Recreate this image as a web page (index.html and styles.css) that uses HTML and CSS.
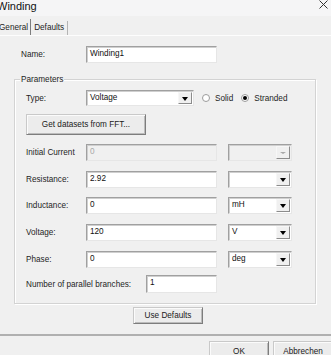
FILE: index.html
```html
<!DOCTYPE html>
<html lang="en">
<head>
    <meta charset="UTF-8">
    <meta name="viewport" content="width=device-width, initial-scale=1.0">
    <title>Winding</title>
    <link rel="stylesheet" href="styles.css">
</head>
<body>
    <div class="titlebar">
        <span class="title">Winding</span>
        <svg class="close" width="9" height="9" viewBox="0 0 9 9">
            <path d="M0.5 0.5 L8.5 8.5 M8.5 0.5 L0.5 8.5" stroke="#333" stroke-width="1"/>
        </svg>
    </div>

    <div class="tabs">
        <div class="tab active">General</div>
        <div class="tab">Defaults</div>
    </div>

    <div class="panel">
        <div class="row name-row">
            <span class="lbl">Name:</span>
            <div class="field wide">Winding1</div>
        </div>

        <!-- Parameters group box -->
        <div class="group">
            <div class="group-title">Parameters</div>

            <div class="row type-row">
                <span class="lbl">Type:</span>
                <div class="combo type-combo">
                    <span class="combo-text">Voltage</span>
                    <span class="combo-btn"><i class="arrow"></i></span>
                </div>
                <span class="radio"></span><span class="radio-text">Solid</span>
                <span class="radio checked"></span><span class="radio-text">Stranded</span>
            </div>

            <div class="btn btn-fft">Get datasets from FFT...</div>

            <div class="row first">
                <span class="lbl">Initial Current</span>
                <div class="field wide disabled">0</div>
                <div class="combo disabled">
                    <span class="combo-text"></span>
                    <span class="combo-btn"><i class="arrow"></i></span>
                </div>
            </div>
            <div class="row">
                <span class="lbl">Resistance:</span>
                <div class="field wide">2.92</div>
                <div class="combo">
                    <span class="combo-text"></span>
                    <span class="combo-btn"><i class="arrow"></i></span>
                </div>
            </div>
            <div class="row short">
                <span class="lbl">Inductance:</span>
                <div class="field wide">0</div>
                <div class="combo">
                    <span class="combo-text">mH</span>
                    <span class="combo-btn"><i class="arrow"></i></span>
                </div>
            </div>
            <div class="row">
                <span class="lbl">Voltage:</span>
                <div class="field wide">120</div>
                <div class="combo">
                    <span class="combo-text">V</span>
                    <span class="combo-btn"><i class="arrow"></i></span>
                </div>
            </div>
            <div class="row">
                <span class="lbl">Phase:</span>
                <div class="field wide">0</div>
                <div class="combo">
                    <span class="combo-text">deg</span>
                    <span class="combo-btn"><i class="arrow"></i></span>
                </div>
            </div>
            <div class="row branches-row">
                <span class="lbl long">Number of parallel branches:</span>
                <div class="field branches">1</div>
            </div>
        </div>

        <div class="btn btn-defaults">Use Defaults</div>
    </div>

    <div class="footer">
        <div class="btn btn-footer">OK</div>
        <div class="btn btn-footer">Abbrechen</div>
    </div>
</body>
</html>
```

FILE: styles.css
```css
body {
    margin: 0;
    width: 331px;
    height: 355px;
    overflow: hidden;
    background-color: #f0f0f0;
    font-family: 'Liberation Sans', Arial, sans-serif;
    font-size: 8.2px;
    color: #1e1e1e;
}

/* Window title */
.titlebar {
    height: 16px;
    background-color: #f5f5f6;
    display: flex;
    justify-content: space-between;
    align-items: flex-start;
}
.title {
    font-size: 11px;
    line-height: 12px;
    margin-left: -3px;
    color: #111;
}
.close {
    margin: 0 3px 0 0;
}

/* Tabs */
.tabs {
    height: 19px;
    display: flex;
    align-items: flex-end;
}
.tab {
    height: 14px;
    line-height: 13px;
    padding: 0 3px;
    border-right: 1px solid #b4b4b4;
}
.tab.active {
    height: 16px;
    line-height: 17px;
    margin-left: -1px;
    padding: 0 2px 0 0;
    border-right: 1px solid #7e7e7e;
}

.panel {
    border-top: 1px solid #fdfdfd;
    padding: 10px 0 0 14px;
}

/* Rows */
.row {
    display: flex;
    align-items: center;
    height: 17px;
}
.lbl {
    width: 60px;
    flex-shrink: 0;
}
.name-row {
    padding-left: 7px;
}
.name-row .lbl {
    width: 65px;
}

/* Sunken edit fields */
.field {
    box-sizing: border-box;
    height: 17px;
    background-color: #fff;
    border: 1px solid;
    border-color: #a0a0a0 #e6e6e6 #e6e6e6 #a0a0a0;
    box-shadow: inset 1px 1px 0 #cfcfcf;
    padding: 1px 0 0 3px;
    line-height: 12px;
    color: #111;
}
.field.wide {
    width: 131px;
}
.field.disabled {
    background-color: #f0f0f0;
    color: #a8a8a8;
}

/* Group box */
.group {
    box-sizing: border-box;
    width: 302px;
    margin-top: 16px;
    padding: 0 0 10px 11px;
    border: 1px solid #d3d3d3;
    box-shadow: inset 1px 1px 0 #fff, 1px 1px 0 #fff;
}
.group-title {
    width: fit-content;
    margin: -6px 0 0 -6px;
    padding: 0 1px;
    line-height: 11px;
    background-color: #f0f0f0;
}
.type-row {
    height: 16px;
    margin-top: 5px;
}
.row.first {
    margin-top: 9px;
}
.row + .row {
    margin-top: 10px;
}
.row.short {
    margin-top: 9px;
}
.row.branches-row {
    height: 18px;
    margin-top: 7px;
}
.lbl.long {
    width: 120px;
}
.field.branches {
    width: 71px;
    height: 18px;
}

/* Combo boxes */
.combo {
    box-sizing: border-box;
    width: 64px;
    height: 17px;
    margin-left: 11px;
    display: flex;
    background-color: #fff;
    border: 1px solid;
    border-color: #a0a0a0 #e6e6e6 #e6e6e6 #a0a0a0;
    box-shadow: inset 1px 1px 0 #cfcfcf;
}
.combo.type-combo {
    width: 108px;
    height: 16px;
    margin-left: 0;
}
.combo.disabled {
    background-color: #f0f0f0;
}
.combo-text {
    flex: 1;
    padding: 1px 0 0 3px;
    line-height: 12px;
    color: #111;
}
.combo-btn {
    box-sizing: border-box;
    width: 14px;
    margin: 1px 1px 1px 0;
    display: flex;
    align-items: center;
    justify-content: center;
    background-color: #f0f0f0;
    border: 1px solid;
    border-color: #f7f7f7 #8c8c8c #8c8c8c #f7f7f7;
}
.arrow {
    width: 0;
    height: 0;
    border-left: 3.5px solid transparent;
    border-right: 3.5px solid transparent;
    border-top: 4px solid #000;
    margin-top: 1px;
}
.combo.disabled .arrow {
    border-top-color: #a8a8a8;
    border-left-width: 3px;
    border-right-width: 3px;
    border-top-width: 2px;
}

/* Radio buttons */
.radio {
    box-sizing: border-box;
    width: 8px;
    height: 8px;
    margin-left: 8px;
    border-radius: 50%;
    border: 1px solid #9c9c9c;
    background-color: #fff;
    display: flex;
    align-items: center;
    justify-content: center;
}
.radio.checked::after {
    content: '';
    width: 4px;
    height: 4px;
    border-radius: 50%;
    background-color: #000;
}
.radio-text {
    margin-left: 5px;
}

/* Push buttons */
.btn {
    box-sizing: border-box;
    display: flex;
    align-items: center;
    justify-content: center;
    background-color: #ececec;
    border: 1px solid;
    border-color: #c9c9c9 #7d7d7d #7d7d7d #c9c9c9;
    box-shadow: inset 1px 1px 0 #fbfbfb, inset -1px -1px 0 #bcbcbc;
    color: #1a1a1a;
}
.btn-fft {
    width: 120px;
    height: 21px;
    margin-top: 8px;
}
.btn-defaults {
    width: 70px;
    height: 17px;
    margin: 3px 0 0 119px;
}

.footer {
    margin-top: 10px;
    border-top: 2px solid #b0b0b0;
    padding: 5px 0 0 209px;
    display: flex;
    gap: 4px;
}
.btn-footer {
    width: 60px;
    height: 21px;
    flex-shrink: 0;
}
```
